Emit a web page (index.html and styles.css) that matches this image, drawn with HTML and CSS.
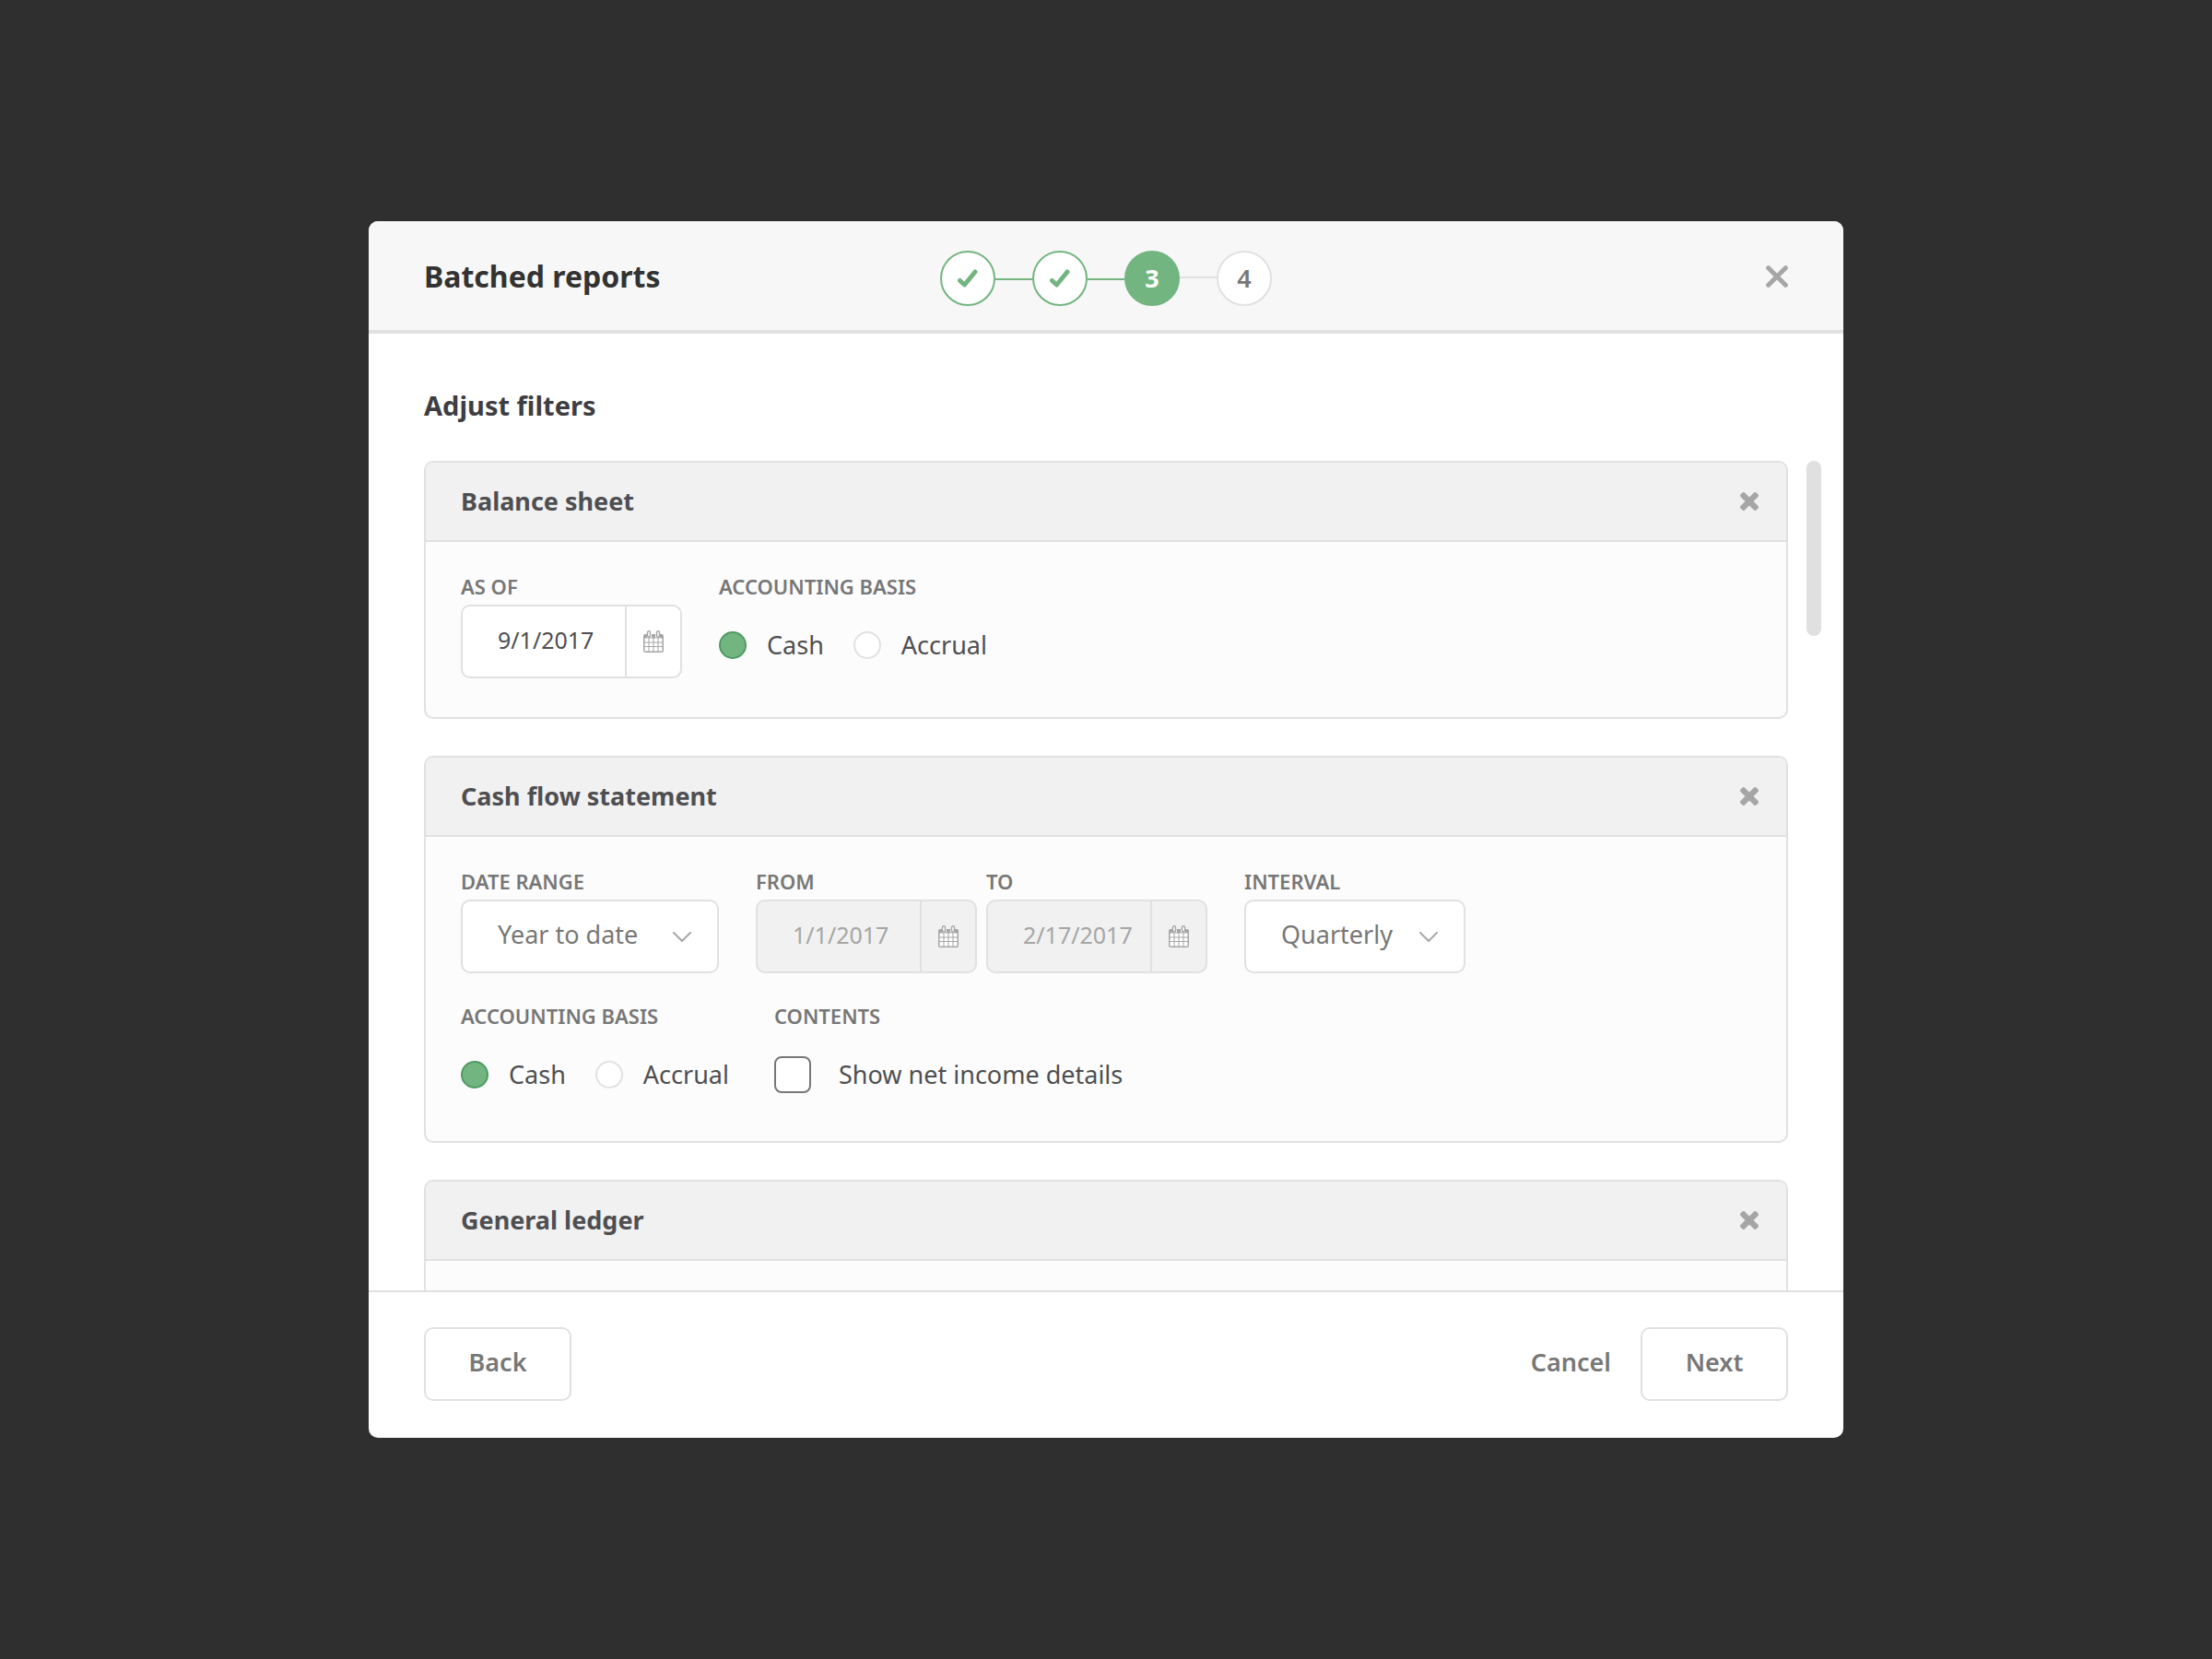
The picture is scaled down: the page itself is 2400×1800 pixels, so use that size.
FILE: index.html
```html
<!DOCTYPE html>
<html lang="en">
<head>
  <meta charset="utf-8">
  <meta name="viewport" content="width=device-width, initial-scale=1">
  <title>Batched reports</title>
  <link rel="stylesheet" href="styles.css">
</head>
<body>
  <svg class="sprite" aria-hidden="true">
    <symbol id="calendar" viewBox="0 0 22 24">
      <path fill="currentColor" d="M2 4h2v3.500h5V4h4v3.500h5V4h2a2 2 0 0 1 2 2v16a2 2 0 0 1-2 2H2a2 2 0 0 1-2-2V6a2 2 0 0 1 2-2z"/>
      <path class="icon-cutout" d="M1.500 8.500h4v4h-4zM6.500 8.500h4v4h-4zM11.500 8.500h4v4h-4zM16.500 8.500h4v4h-4zM1.500 13.500h4v3.500h-4zM6.500 13.500h4v3.500h-4zM11.500 13.500h4v3.500h-4zM16.500 13.500h4v3.500h-4zM1.500 18h4v4.500h-4zM6.500 18h4v4.500h-4zM11.500 18h4v4.500h-4zM16.500 18h4v4.500h-4z"/>
      <rect class="icon-ring" x="4.500" y=".7" width="3" height="6.300" rx="1.500"/>
      <rect class="icon-ring" x="14.500" y=".7" width="3" height="6.300" rx="1.500"/>
    </symbol>
    <symbol id="chevron" viewBox="0 0 22 12">
      <path fill="none" stroke="currentColor" stroke-width="2" stroke-linecap="round" stroke-linejoin="round" d="M2 2l9 9 9-9"/>
    </symbol>
    <symbol id="check" viewBox="0 0 22 20">
      <path fill="none" stroke="currentColor" stroke-width="5" stroke-linecap="round" stroke-linejoin="round" d="M2.500 12.500l5 4.500 11.500-14"/>
    </symbol>
    <symbol id="close" viewBox="0 0 24 24">
      <path fill="none" stroke="currentColor" stroke-width="5" stroke-linecap="round" d="M2.700 2.700l18.600 18.600M21.300 2.700L2.700 21.300"/>
    </symbol>
    <symbol id="remove" viewBox="0 0 20 20">
      <g fill="currentColor">
        <rect x="-2" y="6.800" width="24" height="6.400" rx="2" transform="rotate(45 10 10)"/>
        <rect x="-2" y="6.800" width="24" height="6.400" rx="2" transform="rotate(-45 10 10)"/>
      </g>
    </symbol>
  </svg>

  <div class="modal" role="dialog" aria-modal="true" aria-labelledby="modal-title">
    <header class="modal-header">
      <h1 class="modal-title" id="modal-title">Batched reports</h1>
      <ol class="steps">
        <li class="step step--done"><svg class="icon-check" role="img" aria-label="Step 1 complete"><use href="#check"/></svg></li>
        <li class="step step--done"><svg class="icon-check" role="img" aria-label="Step 2 complete"><use href="#check"/></svg></li>
        <li class="step step--current" aria-current="step">3</li>
        <li class="step">4</li>
      </ol>
      <button class="icon-button modal-close" type="button" aria-label="Close"><svg class="icon-close"><use href="#close"/></svg></button>
    </header>

    <main class="modal-main">
      <h2 class="section-title">Adjust filters</h2>
      <div class="scroll-frame">
        <div class="report-list">

          <section class="report">
            <header class="report-header">
              <h3 class="report-title">Balance sheet</h3>
              <button class="icon-button" type="button" aria-label="Remove Balance sheet"><svg class="icon-remove"><use href="#remove"/></svg></button>
            </header>
            <div class="report-body">
              <div class="filter-row">
                <div class="field">
                  <label class="label" for="bs-date">AS OF</label>
                  <div class="date-box">
                    <input class="date-input" id="bs-date" type="text" value="9/1/2017">
                    <button class="date-button" type="button" aria-label="Choose date"><svg class="icon-calendar"><use href="#calendar"/></svg></button>
                  </div>
                </div>
                <fieldset class="field">
                  <legend class="label">ACCOUNTING BASIS</legend>
                  <div class="choices">
                    <label class="choice"><input class="radio" type="radio" name="bs-basis" checked>Cash</label>
                    <label class="choice"><input class="radio" type="radio" name="bs-basis">Accrual</label>
                  </div>
                </fieldset>
              </div>
            </div>
          </section>

          <section class="report">
            <header class="report-header">
              <h3 class="report-title">Cash flow statement</h3>
              <button class="icon-button" type="button" aria-label="Remove Cash flow statement"><svg class="icon-remove"><use href="#remove"/></svg></button>
            </header>
            <div class="report-body">
              <div class="filter-row">
                <div class="field">
                  <label class="label" for="cf-range">DATE RANGE</label>
                  <div class="select-box select-box--wide">
                    <select class="select" id="cf-range"><option>Year to date</option><option>Quarter to date</option></select>
                    <svg class="icon-chevron" aria-hidden="true"><use href="#chevron"/></svg>
                  </div>
                </div>
                <div class="date-pair">
                  <div class="field">
                    <label class="label" for="cf-from">FROM</label>
                    <div class="date-box date-box--disabled">
                      <input class="date-input" id="cf-from" type="text" value="1/1/2017" disabled>
                      <button class="date-button" type="button" aria-label="Choose start date" disabled><svg class="icon-calendar"><use href="#calendar"/></svg></button>
                    </div>
                  </div>
                  <div class="field">
                    <label class="label" for="cf-to">TO</label>
                    <div class="date-box date-box--disabled">
                      <input class="date-input" id="cf-to" type="text" value="2/17/2017" disabled>
                      <button class="date-button" type="button" aria-label="Choose end date" disabled><svg class="icon-calendar"><use href="#calendar"/></svg></button>
                    </div>
                  </div>
                </div>
                <div class="field">
                  <label class="label" for="cf-interval">INTERVAL</label>
                  <div class="select-box">
                    <select class="select" id="cf-interval"><option>Quarterly</option><option>Monthly</option></select>
                    <svg class="icon-chevron" aria-hidden="true"><use href="#chevron"/></svg>
                  </div>
                </div>
              </div>
              <div class="filter-row">
                <fieldset class="field field--basis">
                  <legend class="label">ACCOUNTING BASIS</legend>
                  <div class="choices">
                    <label class="choice"><input class="radio" type="radio" name="cf-basis" checked>Cash</label>
                    <label class="choice"><input class="radio" type="radio" name="cf-basis">Accrual</label>
                  </div>
                </fieldset>
                <fieldset class="field">
                  <legend class="label">CONTENTS</legend>
                  <div class="choices">
                    <label class="choice choice--check"><input class="checkbox" type="checkbox">Show net income details</label>
                  </div>
                </fieldset>
              </div>
            </div>
          </section>

          <section class="report">
            <header class="report-header">
              <h3 class="report-title">General ledger</h3>
              <button class="icon-button" type="button" aria-label="Remove General ledger"><svg class="icon-remove"><use href="#remove"/></svg></button>
            </header>
            <div class="report-body"></div>
          </section>

        </div>
        <div class="scrollbar" aria-hidden="true"><div class="scrollbar-thumb"></div></div>
      </div>
    </main>

    <footer class="modal-footer">
      <button class="button" type="button">Back</button>
      <div class="footer-actions">
        <button class="button button--text" type="button">Cancel</button>
        <button class="button" type="button">Next</button>
      </div>
    </footer>
  </div>
</body>
</html>
```
FILE: styles.css
```css
:root {
  --line: #e1e1e1;
  --green: #73b580;
  --green-dark: #4f9a62;
  --text: #4f4f51;
  --muted: #777;
  --faint: #a6a6a6;
}

* {
  box-sizing: border-box;
}

body {
  display: grid;
  justify-items: center;
  align-items: center;
  min-height: 100vh;
  margin: 0;
  padding: 240px 40px;
  background: #2f2f2f;
  color: var(--text);
  font: 27px/40px "Noto Sans", "Open Sans", sans-serif;
}

h1, h2, h3, ol, fieldset, legend {
  margin: 0;
  padding: 0;
  border: 0;
}

button, input, select {
  margin: 0;
  padding: 0;
  border: 0;
  background: none;
  color: inherit;
  font: inherit;
}

svg {
  display: block;
}

.sprite {
  position: absolute;
  width: 0;
  height: 0;
}

/* Modal frame */
.modal {
  display: flex;
  flex-direction: column;
  width: 100%;
  max-width: 1600px;
  height: calc(100vh - 480px);
  min-height: 800px;
  overflow: hidden;
  border-radius: 10px;
  background: #fff;
}

.modal-header {
  display: grid;
  grid-template-columns: 1fr auto 1fr;
  align-items: center;
  padding: 32px 60px 26px;
  border-bottom: 4px solid var(--line);
  background: #f7f7f7;
}

.modal-title {
  padding-bottom: 4px;
  color: #333;
  font-size: 32px;
  font-weight: 700;
}

.modal-close {
  justify-self: end;
  padding-bottom: 4px;
}

.icon-button {
  color: var(--faint);
  cursor: pointer;
}

/* Step indicator */
.steps {
  display: flex;
  gap: 40px;
  list-style: none;
}

.step {
  position: relative;
  display: grid;
  place-items: center;
  width: 60px;
  height: 60px;
  border: 2px solid var(--line);
  border-radius: 50%;
  background: #fff;
  color: var(--muted);
  font-weight: 600;
}

.step + .step::before {
  content: "";
  position: absolute;
  top: 26px;
  right: 58px;
  width: 40px;
  height: 2px;
  background: var(--line);
}

.step--done {
  border-color: var(--green);
  color: var(--green);
}

.step--current {
  border-color: var(--green);
  background: var(--green);
  color: #fff;
  font-weight: 700;
}

.step--done + .step--done::before,
.step--done + .step--current::before {
  top: 28px;
  background: var(--green);
}

/* Scrolling list of reports */
.modal-main {
  display: flex;
  flex: 1;
  flex-direction: column;
  gap: 40px;
  min-height: 0;
  padding: 58px 24px 0 60px;
}

.section-title {
  color: #3e3e42;
  font-size: 29px;
  font-weight: 700;
}

.scroll-frame {
  display: flex;
  flex: 1;
  gap: 20px;
  min-height: 0;
}

.report-list {
  display: flex;
  flex: 1;
  flex-direction: column;
  gap: 40px;
  overflow-y: auto;
  scrollbar-width: none;
}

.scrollbar {
  width: 16px;
}

.scrollbar-thumb {
  height: 190px;
  border-radius: 8px;
  background: #e0e0e0;
}

/* Report panel */
.report {
  flex: none;
  overflow: hidden;
  border: 2px solid var(--line);
  border-radius: 10px;
  background: #fcfcfc;
}

.report-header {
  display: flex;
  align-items: center;
  justify-content: space-between;
  padding: 22px 30px 22px 38px;
  border-bottom: 2px solid var(--line);
  background: #f1f1f1;
}

.report-title {
  font-size: 27px;
  font-weight: 700;
}

.report-body {
  display: flex;
  flex-direction: column;
  gap: 34px;
  min-height: 190px;
  padding: 36px 38px 42px;
}

.filter-row {
  display: flex;
  flex-wrap: wrap;
  gap: 40px;
}

.date-pair {
  display: flex;
  gap: 10px;
}

.field--basis {
  width: 300px;
}

.label {
  display: block;
  margin-bottom: 8px;
  color: var(--muted);
  font-size: 22px;
  font-weight: 600;
  line-height: 24px;
}

/* Date and select boxes */
.date-box,
.select-box {
  display: flex;
  width: 240px;
  height: 80px;
  border: 2px solid var(--line);
  border-radius: 10px;
  background: #fff;
}

.date-input {
  flex: 1;
  min-width: 0;
  padding: 0 0 4px 38px;
  font-size: 25px;
}

.date-button {
  display: grid;
  place-items: center;
  width: 60px;
  border-left: 2px solid var(--line);
  color: var(--faint);
}

.date-box--disabled {
  background: #f1f1f1;
  color: var(--faint);
}

.select-box {
  position: relative;
  color: var(--muted);
}

.select-box--wide {
  width: 280px;
}

.select {
  flex: 1;
  padding: 0 60px 4px 38px;
  appearance: none;
}

.icon-chevron {
  position: absolute;
  top: 32px;
  right: 27px;
  width: 22px;
  height: 12px;
  color: var(--faint);
  pointer-events: none;
}

/* Radio buttons and checkbox */
.choices {
  display: flex;
  gap: 32px;
  margin: 24px 0 10px;
}

.choice {
  display: flex;
  align-items: center;
  gap: 22px;
}

.choice--check {
  gap: 30px;
}

.radio,
.checkbox {
  width: 30px;
  height: 30px;
  border: 2px solid var(--line);
  border-radius: 50%;
  background: #fff;
  appearance: none;
}

.radio:checked {
  border-color: var(--green-dark);
  background: var(--green);
}

.checkbox {
  width: 40px;
  height: 40px;
  border-color: var(--muted);
  border-radius: 8px;
}

/* Footer */
.modal-footer {
  display: flex;
  justify-content: space-between;
  padding: 38px 60px 40px;
  border-top: 2px solid var(--line);
}

.footer-actions {
  display: flex;
  gap: 30px;
}

.button {
  width: 160px;
  height: 80px;
  padding-bottom: 4px;
  border: 2px solid var(--line);
  border-radius: 10px;
  background: #fff;
  color: var(--muted);
  font-weight: 600;
  cursor: pointer;
}

.button--text {
  width: auto;
  border-color: transparent;
}

/* Icons */
.icon-close {
  width: 24px;
  height: 24px;
}

.icon-remove {
  width: 20px;
  height: 20px;
}

.icon-check {
  width: 22px;
  height: 20px;
}

.icon-calendar {
  width: 22px;
  height: 24px;
}

.icon-cutout {
  fill: #fff;
}

.icon-ring {
  fill: #fff;
  stroke: currentColor;
  stroke-width: 1.4px;
}

.date-box--disabled .icon-cutout,
.date-box--disabled .icon-ring {
  fill: #f1f1f1;
}
```
